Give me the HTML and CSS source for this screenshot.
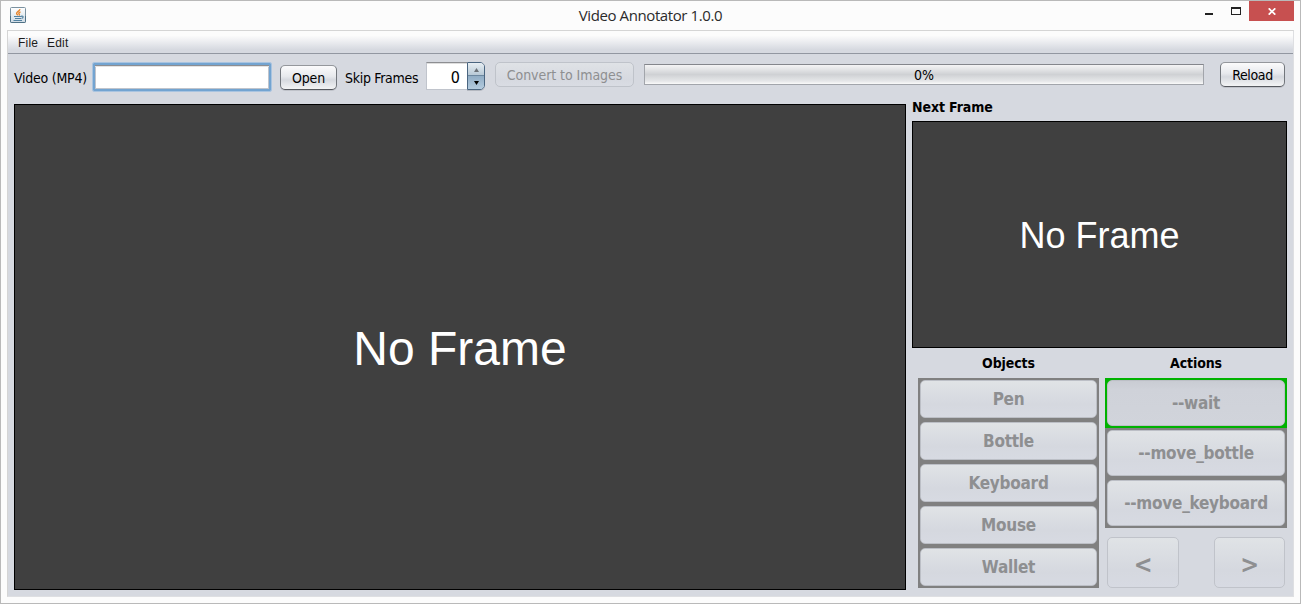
FILE: index.html
```html
<!DOCTYPE html>
<html lang="en">
<head>
<meta charset="utf-8">
<title>Video Annotator 1.0.0</title>
<link rel="stylesheet" href="styles.css">
</head>
<body>
<div class="window">
  <header class="titlebar">
    <svg class="app-icon" width="16" height="16" viewBox="0 0 16 16">
      <defs><linearGradient id="tile" x1="0" y1="0" x2="0" y2="1"><stop offset="0" stop-color="#fff"/><stop offset="1" stop-color="#cfdbe4"/></linearGradient></defs>
      <rect x=".5" y=".5" width="15" height="15" rx="1" fill="url(#tile)" stroke="#7b919f"/>
      <path d="M.5 9v5.5q0 1 1 1h13q1 0 1-1V9" fill="none" stroke="#4f7185"/>
      <path d="M9.800 2.200C10 4 6.400 4.800 6.600 6.400c.1.900 1 1.200 1.200 2M10.500 4.800C8.500 5.600 8.500 6.400 9.300 7.200c.3.500 0 1-.3 1.300" fill="none" stroke="#e8852b" stroke-width="1.400"/>
      <path d="M4 9.500h7M5 11.500h6M3.500 13.500h8.500M11 9.300c3-.8 2.500 1.700.5 2.200" fill="none" stroke="#5382a1" stroke-width="1.200"/>
    </svg>
    <h1 class="title">Video Annotator 1.0.0</h1>
    <div class="controls">
      <svg class="minimize" width="8" height="2"><path d="M0 0h8v2H0z" fill="#222"/></svg>
      <svg class="maximize" width="10" height="8"><path d="M0 0h10v8H0zM1 2v5h8V2z" fill="#222" fill-rule="evenodd"/></svg>
      <div class="close"><svg width="8" height="7" viewBox="0 0 8 7"><path d="M.7.300l6.600 6.400M7.300.300L.7 6.700" stroke="#fff" stroke-width="1.700"/></svg></div>
    </div>
  </header>
  <div class="client">
    <nav class="menubar"><span class="menu menu-file">File</span><span class="menu menu-edit">Edit</span></nav>
    <div class="toolbar">
      <span class="label label-video">Video (MP4)</span>
      <input class="path" type="text">
      <div class="btn open"><span>Open</span></div>
      <span class="label label-skip">Skip Frames</span>
      <div class="spinner">
        <span class="value">0</span>
        <div class="arrows">
          <div class="arrow up"><svg width="5" height="4"><path d="M2.500 0L5 4H0z" fill="#6b7177"/></svg></div>
          <div class="arrow down"><svg width="5" height="4"><path d="M0 0h5L2.500 4z" fill="#000"/></svg></div>
        </div>
      </div>
      <div class="btn convert disabled"><span>Convert to Images</span></div>
      <div class="progress">0%</div>
      <div class="btn reload"><span>Reload</span></div>
    </div>
    <main class="content">
      <div class="frame frame-main"><span>No Frame</span></div>
      <aside class="side">
        <h2 class="heading next">Next Frame</h2>
        <div class="frame frame-next"><span>No Frame</span></div>
        <div class="columns">
          <section class="objects">
            <h2 class="heading">Objects</h2>
            <div class="list">
              <div class="item"><div class="choice">Pen</div></div>
              <div class="item"><div class="choice">Bottle</div></div>
              <div class="item"><div class="choice">Keyboard</div></div>
              <div class="item"><div class="choice">Mouse</div></div>
              <div class="item"><div class="choice">Wallet</div></div>
            </div>
          </section>
          <section class="actions">
            <h2 class="heading">Actions</h2>
            <div class="list">
              <div class="item selected"><div class="choice">--wait</div></div>
              <div class="item"><div class="choice">--move_bottle</div></div>
              <div class="item"><div class="choice">--move_keyboard</div></div>
            </div>
            <div class="pager">
              <div class="nav prev">&lt;</div>
              <div class="nav following">&gt;</div>
            </div>
          </section>
        </div>
      </aside>
    </main>
  </div>
</div>
</body>
</html>
```
FILE: styles.css
```css
* { box-sizing: border-box; }
body {
  margin: 0;
  overflow: hidden;
  font: 14px/18px "DejaVu Sans Condensed", "DejaVu Sans", sans-serif;
  color: #000;
}
svg { display: block; }
.window {
  width: 1301px;
  height: 604px;
  border: 1px solid #b9b9b9;
  background: #fcfcfc;
  padding: 0 6px 6px;
}
.titlebar {
  display: grid;
  grid-template-columns: 120px 1fr 120px;
  height: 29px;
}
.app-icon { margin: 6px 0 0 3px; }
.title {
  margin: 4px 0 0;
  font: 15px/20px "Open Sans", sans-serif;
  letter-spacing: -0.4px;
  text-align: center;
  color: #2b2b2b;
}
.controls { display: flex; justify-content: flex-end; }
.minimize { margin: 12px 18px 0 0; }
.maximize { margin: 6px 8px 0 0; }
.close {
  display: flex;
  align-items: center;
  justify-content: center;
  width: 45px;
  height: 20px;
  background: #c75050;
}
.client {
  height: 567px;
  border: 1px solid #d5d5d5;
  border-right-color: #dedfe2;
  border-bottom-color: #dedfe2;
  background: #d6d9e0;
}
.menubar {
  display: flex;
  height: 23px;
  border-bottom: 1px solid #9297a1;
  background: linear-gradient(#fcfcfc 20%, #eeeff2 45%, #d6d9e0 85%);
  font: 12px/24px "Liberation Sans", sans-serif;
  padding-left: 10px;
  color: #1c1c1c;
}
.menu { letter-spacing: .2px; }
.menu-file { width: 29px; }
.toolbar {
  display: flex;
  align-items: flex-start;
  height: 50px;
  padding: 8px 8px 0 6px;
}
.label { margin-top: 7px; white-space: nowrap; }
.label-video { width: 79px; letter-spacing: -0.25px; }
.path {
  width: 178px;
  height: 28px;
  margin: 1px 9px 0 0;
  padding: 0 6px;
  border: 2px solid #73a4d1;
  outline: 1px solid #a9c4e0;
  outline-offset: 0;
  border-radius: 1px;
  background: #fff;
  box-shadow: inset 0 1px 0 #8d8e92, inset 0 2px 0 #e4e4e4, inset 1px 0 0 #c0c4cc, inset -1px -1px 0 #c0c4cc;
}
.btn {
  display: flex;
  align-items: center;
  justify-content: center;
  height: 25px;
  border: 1px solid #7b7f86;
  border-color: #94979c #72767c #55585e;
  border-radius: 5px;
  background: linear-gradient(#fbfbfc, #e7e9ed 45%, #d6d9df 60%, #f3f4f5);
  box-shadow: 0 1px 0 #bfc2c9;
  white-space: nowrap;
}
.open { width: 57px; margin: 3px 8px 0 0; letter-spacing: -0.15px; }
.label-skip { width: 81px; letter-spacing: -0.3px; }
.spinner { display: flex; width: 59px; height: 29px; margin-right: 10px; }
.value {
  width: 41px;
  height: 28px;
  border: 1px solid #c0c4cc;
  border-top: 1px solid #8d8e92;
  border-right: 0;
  background: #fff;
  box-shadow: inset 0 1px 0 #dedede;
  font-size: 16px;
  line-height: 29px;
  text-align: right;
  padding-right: 7px;
}
.arrows {
  width: 18px;
  height: 28px;
  border: 1px solid #4a6580;
  border-radius: 0 5px 5px 0;
  overflow: hidden;
  box-shadow: 0 1px 0 #b4b8c0;
}
.arrow { display: flex; align-items: center; justify-content: center; height: 13px; padding-top: 2px; }
.up { background: linear-gradient(#e7eef3, #b8c9d6); border-bottom: 1px solid #6c879f; }
.down { background: linear-gradient(#90acc4, #b3cbdf); padding-top: 0; }
.disabled {
  border-color: #bfc3ca;
  background: linear-gradient(#dfe2e6, #d6d9e0 70%, #d9dce3);
  box-shadow: none;
  color: #8e8f91;
}
.convert { width: 139px; margin-right: 10px; letter-spacing: -0.06px; }
.progress {
  width: 560px;
  height: 21px;
  margin: 2px 16px 0 0;
  border: 1px solid #a2a5ab;
  border-top-color: #84868c;
  background: linear-gradient(#f4f4f5, #e2e3e5 25%, #cfd1d4 50%, #e6e7e9 85%, #fafafa);
  line-height: 20px;
  text-align: center;
}
.reload { width: 65px; letter-spacing: -0.35px; }
.content { display: flex; padding-left: 6px; }
.frame {
  display: flex;
  align-items: center;
  justify-content: center;
  border: 1px solid #000;
  background: #404040;
  color: #fff;
  font-family: "Liberation Sans", sans-serif;
}
.frame-main { width: 892px; height: 486px; margin-right: 6px; font-size: 48px; line-height: 56px; }
.frame-next { width: 375px; height: 227px; font-size: 36px; line-height: 42px; }
.frame-next span { padding-top: 2px; }
.frame-main span { padding-top: 4px; }
.side { width: 375px; margin-top: -6px; }
.heading {
  margin: 0;
  font: bold 14px/18px "DejaVu Sans Condensed", sans-serif;
  letter-spacing: -0.1px;
  text-align: center;
}
.next { height: 23px; text-align: left; }
.columns { display: flex; gap: 6px; padding: 6px 0 0 6px; }
.objects { width: 181px; }
.actions { width: 182px; }
.heading + .list { margin-top: 6px; }
.list { background: #808080; }
.item { padding: 2px; }
.objects .item { height: 42px; }
.actions .item { height: 50px; }
.choice, .nav {
  display: flex;
  align-items: center;
  justify-content: center;
  height: 100%;
  border: 1px solid #bcbfc6;
  border-radius: 5px;
  background: linear-gradient(#e0e3e6, #d5d8df 65%, #d7dae2);
  color: #8e8f91;
  font: bold 17px/20px "DejaVu Sans Condensed", sans-serif;
  letter-spacing: -0.25px;
}
.selected { background: #00b200; }
.selected .choice { background: linear-gradient(#c9ccd3, #cfd2d9 20%, #d1d4db); }
.pager { display: flex; justify-content: space-between; padding: 9px 2px 0; }
.nav { height: 51px; padding-top: 4px; font-size: 25px; border-color: #c0c3ca; }
.prev { width: 72px; }
.following { width: 71px; }
```
